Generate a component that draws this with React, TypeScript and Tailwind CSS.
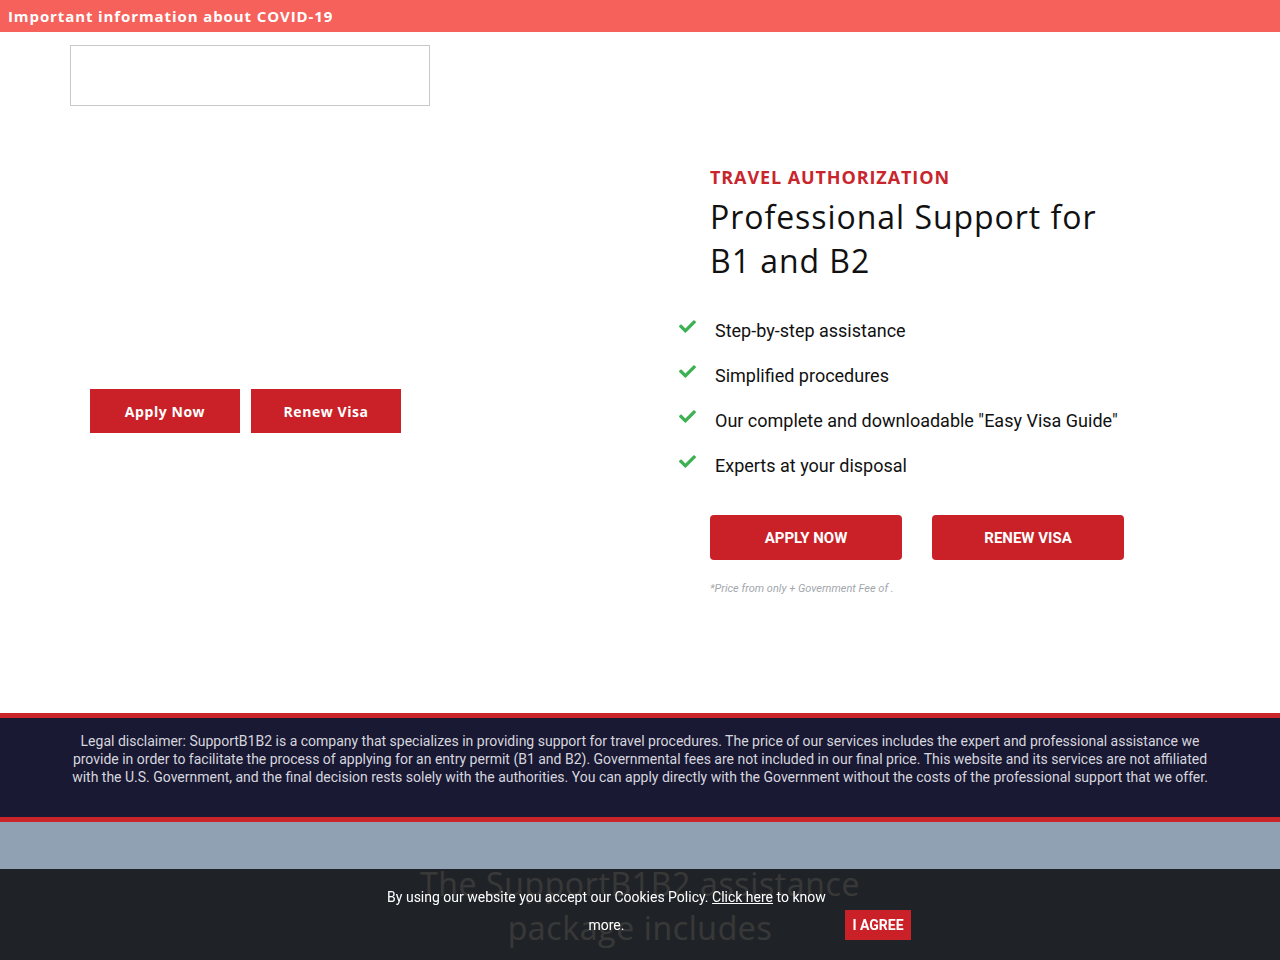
import { FaCheck } from "react-icons/fa";

const display = "font-['Open_Sans',_'Liberation_Sans',_sans-serif]";
const body = "font-['Roboto',_'Liberation_Sans',_sans-serif]";

const perks = [
  "Step-by-step assistance",
  "Simplified procedures",
  'Our complete and downloadable "Easy Visa Guide"',
  "Experts at your disposal",
];

function TopNotice() {
  return (
    <div className="h-8 bg-[#f6615b] flex items-center px-2">
      <span className={`${display} text-[15px] font-bold text-white tracking-[0.06em]`}>
        Important information about COVID-19
      </span>
    </div>
  );
}

function Hero() {
  return (
    <section className="flex h-[681px]">
      <div className="w-[640px] pl-[70px] pt-[13px]">
        <div className="w-[360px] h-[61px] border border-[#c8c8c8]" />
        <div className="mt-[283px] ml-[20px] flex gap-[11px]">
          <a className={`${display} w-[150px] h-[44px] bg-[#c92127] text-white text-[14px] font-bold flex items-center justify-center tracking-[0.04em]`}>
            Apply Now
          </a>
          <a className={`${display} w-[150px] h-[44px] bg-[#c92127] text-white text-[14px] font-bold flex items-center justify-center tracking-[0.04em]`}>
            Renew Visa
          </a>
        </div>
      </div>

      <div className="pl-[70px] pt-[134px]">
        <div className={`${display} text-[18px] leading-[22px] font-bold text-[#c8252c] tracking-[0.05em]`}>
          TRAVEL AUTHORIZATION
        </div>
        <h1 className={`${display} mt-[7px] text-[32px] leading-[44px] text-[#111] w-[420px] tracking-[0.03em]`}>
          Professional Support for B1 and B2
        </h1>

        <ul className={`${body} mt-[25px] -ml-[32px]`}>
          {perks.map((p) => (
            <li key={p} className="h-[45px] flex items-center">
              <FaCheck className="w-[19px] h-[17px] text-[#3db151] -mt-[8px]" />
              <span className="ml-[18px] text-[18px] text-[#111]">{p}</span>
            </li>
          ))}
        </ul>

        <div className="mt-[27px] flex gap-[30px]">
          <a className={`${body} w-[192px] h-[45px] rounded-[4px] bg-[#c92127] text-white text-[15px] font-bold flex items-center justify-center pt-[1px]`}>
            APPLY NOW
          </a>
          <a className={`${body} w-[192px] h-[45px] rounded-[4px] bg-[#c92127] text-white text-[15px] font-bold flex items-center justify-center pt-[1px]`}>
            RENEW VISA
          </a>
        </div>
        <p className={`${body} mt-[21px] text-[11px] leading-[15px] italic text-[#a3a7ad]`}>
          *Price from only + Government Fee of .
        </p>
      </div>
    </section>
  );
}

function Disclaimer() {
  return (
    <div className="border-y-[5px] border-[#c9252b] bg-[#1a1934] h-[109px]">
      <p className={`${body} max-w-[1150px] mx-auto pt-[14px] text-center text-[14px] leading-[18px] text-[#d6d6de]`}>
        Legal disclaimer: SupportB1B2 is a company that specializes in providing support for travel
        procedures. The price of our services includes the expert and professional assistance we provide
        in order to facilitate the process of applying for an entry permit (B1 and B2). Governmental fees
        are not included in our final price. This website and its services are not affiliated with the
        U.S. Government, and the final decision rests solely with the authorities. You can apply directly
        with the Government without the costs of the professional support that we offer.
      </p>
    </div>
  );
}

function Package() {
  return (
    <section className="bg-[#8fa1b3] pt-[40px] pb-[200px]">
      <h2 className={`${display} max-w-[520px] mx-auto text-center text-[32px] leading-[44px] text-white tracking-[0.02em]`}>
        The SupportB1B2 assistance package includes
      </h2>
    </section>
  );
}

function CookieBar() {
  return (
    <div className="fixed bottom-0 inset-x-0 h-[91px] bg-black/[0.78] flex justify-center items-start pt-[14px] pl-[12px]">
      <div className="flex items-end gap-[14px]">
        <p className={`${body} w-[450px] text-center text-[14px] leading-[28px] text-white`}>
          By using our website you accept our Cookies Policy. <span className="underline">Click here</span> to know more.
        </p>
        <button className={`${body} h-[30px] px-[7px] -mb-[1px] bg-[#c92127] text-white text-[14px] font-bold`}>
          I AGREE
        </button>
      </div>
    </div>
  );
}

export default function App() {
  return (
    <div className="bg-white min-h-screen">
      <TopNotice />
      <Hero />
      <Disclaimer />
      <Package />
      <CookieBar />
    </div>
  );
}
